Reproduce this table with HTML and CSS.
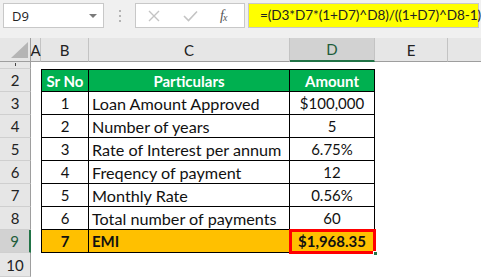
FILE: index.html
```html
<!DOCTYPE html>
<html>
<head>
<meta charset="utf-8">
<link rel="stylesheet" href="styles.css">
</head>
<body>
<div class="app">
  <div class="fbar">
    <div class="namebox">
      <span class="nb-text">D9</span>
      <svg class="dd" width="8" height="5" viewBox="0 0 8 5"><polygon points="0,0 8,0 4,4" fill="#7a7a7a"/></svg>
    </div>
    <div class="grip"><i></i><i></i><i></i></div>
    <div class="btns">
      <svg class="ic-x" width="12" height="12" viewBox="0 0 12 12"><path d="M1 1 L11 11 M11 1 L1 11" stroke="#c4c4c4" stroke-width="1.4" fill="none"/></svg>
      <svg class="ic-check" width="15" height="12" viewBox="0 0 15 12"><path d="M1 6 L5.5 10.5 L14 1.5" stroke="#c4c4c4" stroke-width="1.6" fill="none"/></svg>
      <span class="fx">f<sub>x</sub></span>
    </div>
    <div class="formula">=(D3*D7*(1+D7)^D8)/((1+D7)^D8-1)</div>
  </div>

  <div class="sheet">
    <div class="ch corner"><svg width="17" height="16" viewBox="0 0 17 16"><polygon points="17,0 17,16 0,16" fill="#b5b5b5"/></svg></div>
    <div class="ch">A</div>
    <div class="ch">B</div>
    <div class="ch">C</div>
    <div class="ch sel">D</div>
    <div class="ch">E</div>
    <div class="ch last"></div>

    <div class="rh r1"><span class="tick"></span></div>
    <div></div><div></div><div></div><div></div><div></div><div></div>

    <div class="rh">2</div><div></div>
    <div class="c hd first top">Sr No</div>
    <div class="c hd top">Particulars</div>
    <div class="c hd top">Amount</div>
    <div></div><div></div>

    <div class="rh">3</div><div></div>
    <div class="c ctr first">1</div>
    <div class="c txt">Loan Amount Approved</div>
    <div class="c ctr">$100,000</div>
    <div></div><div></div>

    <div class="rh">4</div><div></div>
    <div class="c ctr first">2</div>
    <div class="c txt">Number of years</div>
    <div class="c ctr">5</div>
    <div></div><div></div>

    <div class="rh">5</div><div></div>
    <div class="c ctr first">3</div>
    <div class="c txt">Rate of Interest per annum</div>
    <div class="c ctr">6.75%</div>
    <div></div><div></div>

    <div class="rh">6</div><div></div>
    <div class="c ctr first">4</div>
    <div class="c txt">Freqency of payment</div>
    <div class="c ctr">12</div>
    <div></div><div></div>

    <div class="rh">7</div><div></div>
    <div class="c ctr first">5</div>
    <div class="c txt">Monthly Rate</div>
    <div class="c ctr">0.56%</div>
    <div></div><div></div>

    <div class="rh">8</div><div></div>
    <div class="c ctr first">6</div>
    <div class="c txt">Total number of payments</div>
    <div class="c ctr">60</div>
    <div></div><div></div>

    <div class="rh rsel">9</div><div></div>
    <div class="c ctr first emi">7</div>
    <div class="c emi">EMI</div>
    <div class="c ctr emi active">$1,968.35</div>
    <div></div><div></div>

    <div class="rh">10</div>
    <div></div><div></div><div></div><div></div><div></div><div></div>
  </div>
</div>
</body>
</html>
```

FILE: styles.css
```css
html, body {
  margin: 0;
  padding: 0;
  background: #ffffff;
}
.app {
  width: 481px;
  height: 277px;
  overflow: hidden;
  font-family: Lato, "Liberation Sans", sans-serif;
  color: #000;
}
.fbar {
  height: 38px;
  box-sizing: border-box;
  background: #f0f0f0;
  display: flex;
  align-items: flex-start;
  padding-top: 3px;
  padding-left: 3px;
}
.namebox {
  width: 101px;
  height: 25px;
  box-sizing: border-box;
  background: #fff;
  border: 1px solid #c8c8c8;
  display: flex;
  align-items: center;
  justify-content: space-between;
  padding: 0 6px 0 8px;
}
.nb-text {
  font-family: "Open Sans", "Noto Sans", sans-serif;
  font-size: 13px;
  color: #222;
}
.dd { margin-top: 1px; }
.grip {
  width: 31px;
  height: 25px;
  display: flex;
  flex-direction: column;
  align-items: center;
  justify-content: center;
  gap: 3px;
}
.grip i {
  display: block;
  width: 2px;
  height: 2px;
  background: #b4b4b4;
}
.btns {
  width: 110px;
  height: 25px;
  box-sizing: border-box;
  background: #fff;
  border: 1px solid #c8c8c8;
  display: flex;
  align-items: center;
  padding-left: 12px;
}
.ic-x { margin-right: 23px; }
.ic-check { margin-right: 22px; }
.fx {
  font-family: "Liberation Serif", serif;
  font-style: italic;
  font-size: 14px;
  color: #555;
  letter-spacing: -1px;
}
.fx sub { font-size: 10px; vertical-align: -1px; }
.formula {
  margin-left: 3px;
  width: 231px;
  height: 25px;
  box-sizing: border-box;
  background: #ffff00;
  border: 1px solid #c8c8c8;
  font-size: 13.6px;
  letter-spacing: -0.1px;
  line-height: 23px;
  padding-left: 11px;
  color: #222;
  white-space: nowrap;
}

.sheet {
  display: grid;
  grid-template-columns: 31px 10px 48px 201px 85px 73px 1fr;
  grid-template-rows: 24px 7px repeat(8, 23px) 24px;
  font-size: 15px;
}
.ch {
  background: #e6e6e6;
  border-right: 1px solid #c3c3c3;
  border-bottom: 1px solid #9e9e9e;
  box-sizing: border-box;
  display: flex;
  align-items: center;
  justify-content: center;
  color: #222;
  font-size: 15px;
}
.ch.corner {
  align-items: flex-end;
  justify-content: flex-end;
  padding: 0 2px 3px 0;
  border-right: 1px solid #9e9e9e;
}
.ch.last { border-right: none; }
.ch.sel {
  background: #d2d2d2;
  border-bottom: 2px solid #217346;
  color: #1e5c3a;
}
.rh {
  background: #e6e6e6;
  border-right: 1px solid #9e9e9e;
  border-bottom: 1px solid #cfcfcf;
  box-sizing: border-box;
  display: flex;
  align-items: center;
  justify-content: center;
  color: #222;
  font-size: 15px;
}
.rh.r1 { align-items: flex-start; }
.tick {
  display: block;
  width: 1px;
  height: 3px;
  margin-top: 1px;
  background: #444;
}
.rh.rsel {
  background: #d2d2d2;
  border-right: 2px solid #217346;
  color: #1e5c3a;
}
.c {
  border-right: 1px solid #000;
  border-bottom: 1px solid #000;
  box-sizing: border-box;
  display: flex;
  align-items: center;
  padding-left: 3px;
  white-space: nowrap;
  overflow: hidden;
  color: #111;
}
.c.txt { font-size: 16.2px; }
.c.first { border-left: 1px solid #000; }
.c.top { border-top: 1px solid #000; }
.c.ctr { justify-content: center; padding-left: 0; }
.c.hd {
  background: #00b050;
  color: #fff;
  font-weight: bold;
  justify-content: center;
  padding-left: 0;
}
.c.emi {
  background: #ffc000;
  font-weight: bold;
}
.c.active {
  position: relative;
  overflow: visible;
  outline: 3px solid #ff0000;
  outline-offset: -2px;
}
.c.active::after {
  content: "";
  position: absolute;
  right: -3px;
  bottom: -3px;
  width: 3px;
  height: 3px;
  background: #217346;
  border-left: 1px solid #fff;
  border-top: 1px solid #fff;
}
```
